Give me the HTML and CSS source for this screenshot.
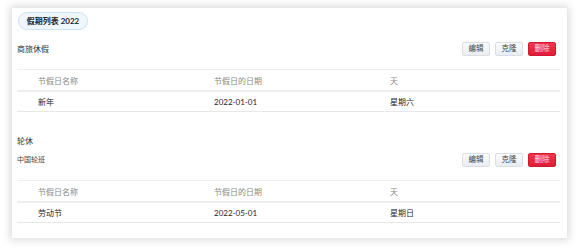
FILE: index.html
```html
<!DOCTYPE html>
<html>
<head>
<meta charset="utf-8">
<link rel="stylesheet" href="styles.css">
</head>
<body>
<div class="card">
  <div class="pill">假期列表 2022</div>

  <div class="section">
    <div class="sec-head">
      <div class="titles">
        <div class="title">商旅休假</div>
      </div>
      <div class="actions">
        <button class="btn">编辑</button>
        <button class="btn">克隆</button>
        <button class="btn danger">删除</button>
      </div>
    </div>
    <div class="table">
      <div class="row head">
        <div class="c1">节假日名称</div>
        <div class="c2">节假日的日期</div>
        <div class="c3">天</div>
      </div>
      <div class="row">
        <div class="c1">新年</div>
        <div class="c2">2022-01-01</div>
        <div class="c3">星期六</div>
      </div>
    </div>
  </div>

  <div class="section second">
    <div class="sec-head">
      <div class="titles">
        <div class="title">轮休</div>
        <div class="subtitle">中国轮班</div>
      </div>
      <div class="actions">
        <button class="btn">编辑</button>
        <button class="btn">克隆</button>
        <button class="btn danger">删除</button>
      </div>
    </div>
    <div class="table">
      <div class="row head">
        <div class="c1">节假日名称</div>
        <div class="c2">节假日的日期</div>
        <div class="c3">天</div>
      </div>
      <div class="row">
        <div class="c1">劳动节</div>
        <div class="c2">2022-05-01</div>
        <div class="c3">星期日</div>
      </div>
    </div>
  </div>
</div>
</body>
</html>
```

FILE: styles.css
```css
html, body {
  margin: 0;
  padding: 0;
  background: #ffffff;
}
body {
  font-family: Lato, "Noto Sans CJK SC", sans-serif;
  color: #333;
  font-size: 8px;
}
.card {
  margin: 8px 13px 10px 12px;
  height: 230px;
  box-sizing: border-box;
  background: #fff;
  box-shadow: 0 0 8px 2px rgba(0,0,0,0.15);
  padding: 4px 7px 0 5px;
}
.pill {
  display: inline-block;
  margin-left: 1px;
  width: 70px;
  height: 18px;
  line-height: 16px;
  box-sizing: border-box;
  text-align: center;
  border: 1px solid #cde2f7;
  border-radius: 9px;
  background: #eef6fe;
  font-weight: bold;
  font-size: 8px;
  color: #222;
}
.section {
  margin-top: 12px;
}
.section.second {
  margin-top: 22px;
}
.sec-head {
  display: flex;
  align-items: flex-end;
  justify-content: space-between;
  padding-bottom: 13px;
}
.title {
  font-size: 8px;
  color: #333;
  line-height: 14px;
}
.subtitle {
  font-size: 7px;
  color: #444;
  margin-top: 5px;
  padding-bottom: 2px;
  line-height: 12px;
}
.actions {
  display: flex;
  gap: 5px;
  margin-right: 4px;
}
.btn {
  font-family: inherit;
  font-size: 7.5px;
  width: 28px;
  height: 14px;
  padding: 0;
  line-height: 12px;
  border: 1px solid #dadfe5;
  border-radius: 2px;
  background: linear-gradient(#fafbfc, #eaedf0);
  color: #444;
}
.btn.danger {
  background: linear-gradient(#f4364d, #dd1e34);
  border-color: #d0192f;
  color: #fde;
}
.table {
  border-top: 1px solid #f0f0f0;
}
.row {
  display: flex;
  height: 19px;
  align-items: center;
  border-bottom: 1px solid #e8e8e8;
  font-size: 8px;
  color: #1e1e1e;
}
.row.head {
  height: 20px;
  color: #888;
  border-bottom: 2px solid #eeeeee;
}
.c1 { width: 176px; padding-left: 21px; box-sizing: content-box; }
.c2 { width: 176px; }
.c3 { flex: 1; }
```
